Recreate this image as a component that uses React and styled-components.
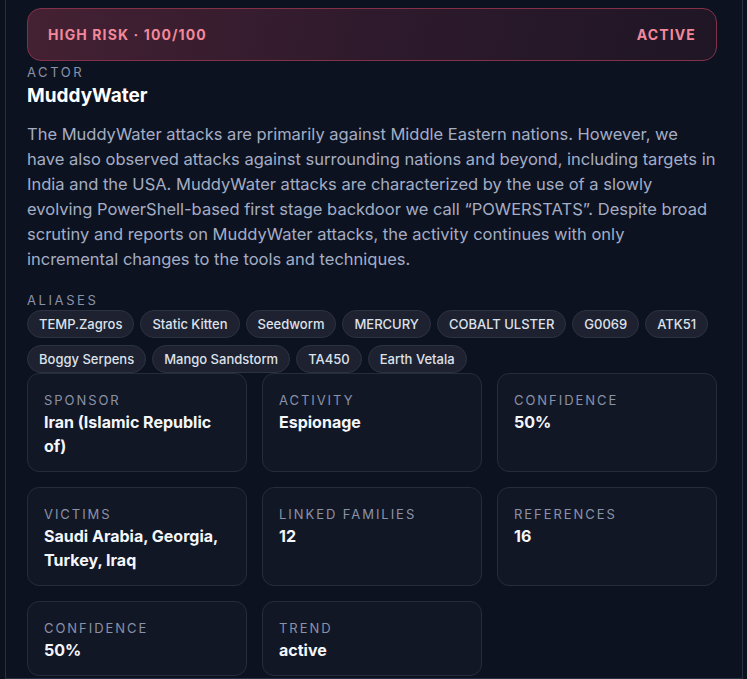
import styled, { createGlobalStyle } from "styled-components"

const Global = createGlobalStyle`
    * { box-sizing: border-box; }
    body {
        margin: 0;
        background: #0c111e;
        font-family: Inter, "Noto Sans", sans-serif;
        color: #e8ebf2;
    }
`

const Page = styled.div`
    padding: 0 4px 0 5px;
    height: 100vh;
    overflow: hidden;
`

const Panel = styled.section`
    background: #0d1221;
    border: 1px solid #283044;
    border-top: none;
    padding: 8px 25px 0 21px;
    min-height: 100%;
`

const Banner = styled.div`
    display: flex;
    justify-content: space-between;
    align-items: center;
    height: 53px;
    padding: 0 20px;
    border: 1px solid #833149;
    border-radius: 14px;
    background: linear-gradient(100deg, #442133 0%, #2e1a2c 50%, #1f1625 100%);
    color: #f3889b;
    font-size: 14px;
    font-weight: 700;
    letter-spacing: 0.08em;
`

const Label = styled.div`
    font-size: 13px;
    line-height: 16px;
    letter-spacing: ${p => p.$tight ? "0.15em" : "0.2em"};
    text-transform: uppercase;
    color: #8a92a7;
    margin-top: ${p => p.$top || 0}px;
`

const Name = styled.h1`
    margin: 4px 0 0;
    font-size: 19px;
    line-height: 24px;
    font-weight: 700;
    color: #ffffff;
`

const Description = styled.p`
    margin: 14px 0 0;
    font-size: 16.5px;
    line-height: 25px;
    color: #a4adc4;
`

const Chips = styled.div`
    display: flex;
    flex-wrap: wrap;
    gap: 7px 6px;
    margin-top: 2px;
`

const Chip = styled.span`
    display: inline-flex;
    align-items: center;
    height: 28px;
    padding: 0 11px;
    border-radius: 999px;
    background: #1d2130;
    border: 1px solid #2d3242;
    font-size: 13px;
    font-weight: 500;
    color: #dde1ea;
`

const Grid = styled.div`
    display: grid;
    grid-template-columns: repeat(3, 1fr);
    gap: 15px;
`

const Card = styled.div`
    background: #121726;
    border: 1px solid #262c3b;
    border-radius: 12px;
    padding: 18px 16px 13px;
`

const CardValue = styled.div`
    margin-top: 2px;
    font-size: 16px;
    line-height: 24px;
    font-weight: 700;
    color: #f4f6fa;
`

const aliases = [
    "TEMP.Zagros", "Static Kitten", "Seedworm", "MERCURY", "COBALT ULSTER", "G0069", "ATK51",
    "Boggy Serpens", "Mango Sandstorm", "TA450", "Earth Vetala",
]

const facts = [
    ["Sponsor", "Iran (Islamic Republic of)"],
    ["Activity", "Espionage"],
    ["Confidence", "50%"],
    ["Victims", "Saudi Arabia, Georgia, Turkey, Iraq"],
    ["Linked families", "12"],
    ["References", "16"],
    ["Confidence", "50%"],
    ["Trend", "active"],
]

export default function App(){
    return (
        <Page>
            <Global/>
            <Panel>
                <Banner>
                    <span>HIGH RISK · 100/100</span>
                    <span>ACTIVE</span>
                </Banner>
                <Label $top={3}>Actor</Label>
                <Name>MuddyWater</Name>
                <Description>
                    The MuddyWater attacks are primarily against Middle Eastern nations. However, we have also observed attacks against surrounding nations and beyond, including targets in India and the USA. MuddyWater attacks are characterized by the use of a slowly evolving PowerShell-based first stage backdoor we call “POWERSTATS”. Despite broad scrutiny and reports on MuddyWater attacks, the activity continues with only incremental changes to the tools and techniques.
                </Description>
                <Label $top={20}>Aliases</Label>
                <Chips>
                    {aliases.map(a => <Chip key={a}>{a}</Chip>)}
                </Chips>
                <Grid>
                    {facts.map(([label, value], i) => (
                        <Card key={i}>
                            <Label $tight>{label}</Label>
                            <CardValue>{value}</CardValue>
                        </Card>
                    ))}
                </Grid>
            </Panel>
        </Page>
    )
}
